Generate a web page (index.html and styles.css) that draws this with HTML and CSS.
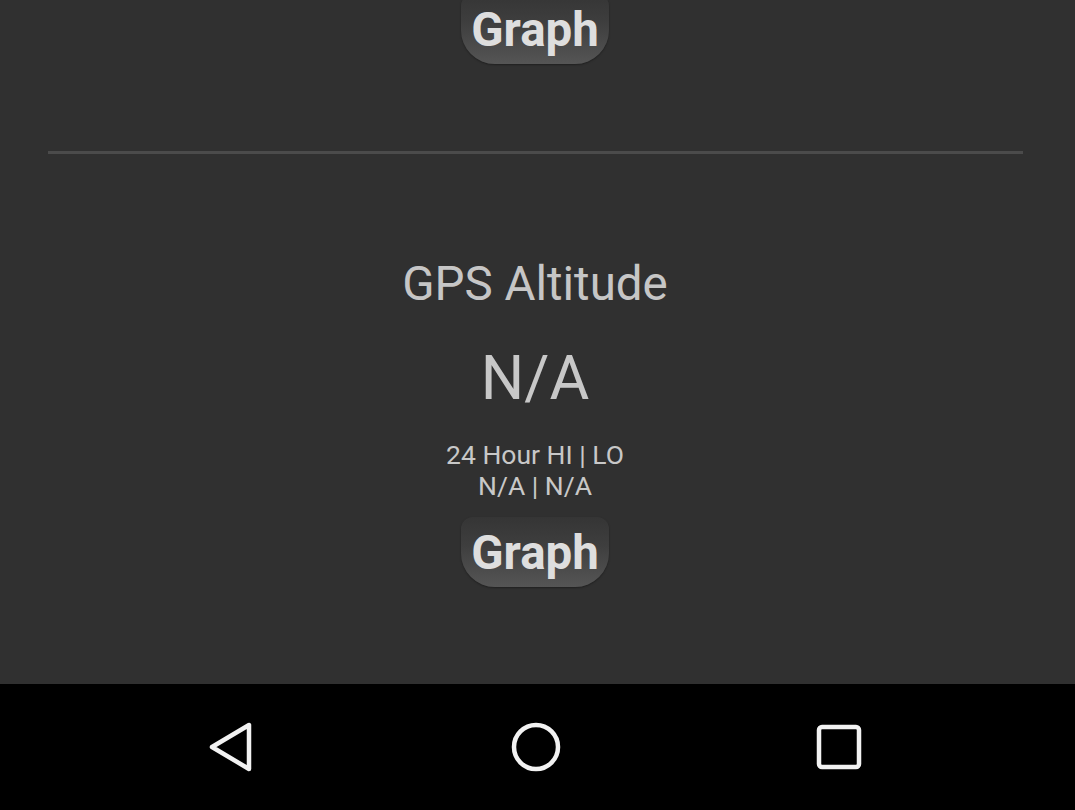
FILE: index.html
```html
<!DOCTYPE html>
<html>
<head>
<meta charset="utf-8">
<link rel="stylesheet" href="styles.css">
</head>
<body>
<div class="screen">
  <main class="content">
    <div class="graph-btn top-btn">Graph</div>
    <div class="divider"></div>
    <div class="title">GPS Altitude</div>
    <div class="value">N/A</div>
    <div class="hilo">
      <div>24 Hour HI | LO</div>
      <div>N/A | N/A</div>
    </div>
    <div class="graph-btn">Graph</div>
  </main>
  <nav class="navbar">
    <svg class="nav-icon" width="60" height="60" viewBox="0 0 60 60">
      <path d="M10 30 L47 8 L47 52 Z" fill="none" stroke="#f2f2f2" stroke-width="4.5" stroke-linejoin="round"/>
    </svg>
    <svg class="nav-icon" width="60" height="60" viewBox="0 0 60 60">
      <circle cx="30" cy="30" r="22" fill="none" stroke="#f2f2f2" stroke-width="4.5"/>
    </svg>
    <svg class="nav-icon" width="60" height="60" viewBox="0 0 60 60">
      <rect x="10" y="10" width="40" height="40" rx="3" fill="none" stroke="#f2f2f2" stroke-width="4.5"/>
    </svg>
  </nav>
</div>
</body>
</html>
```

FILE: styles.css
```css
html, body {
  margin: 0;
  padding: 0;
  background: #303030;
}
body {
  font-family: Roboto, "Liberation Sans", sans-serif;
  overflow: hidden;
}
.screen {
  width: 1075px;
  height: 810px;
  display: flex;
  flex-direction: column;
}
.content {
  flex: 1;
  display: flex;
  flex-direction: column;
  align-items: center;
  overflow: hidden;
  padding-right: 5px;
}
.graph-btn {
  width: 148px;
  height: 70px;
  box-sizing: border-box;
  border-radius: 12px 12px 34px 34px;
  background: linear-gradient(to bottom, #353535 0%, #3e3e3e 40%, #555555 100%);
  box-shadow: 0 1px 2px rgba(0,0,0,0.35);
  color: #dedede;
  font-weight: bold;
  font-size: 47.5px;
  line-height: 70px;
  text-align: center;
  margin-top: 16px;
  padding-top: 1px;
}
.top-btn {
  margin-top: -6px;
  flex-shrink: 0;
}
.divider {
  align-self: stretch;
  margin: 87px 47px 0 48px;
  height: 3px;
  background: #4b4b4b;
  flex-shrink: 0;
}
.title {
  margin-top: 103px;
  font-size: 47.5px;
  line-height: 54px;
  color: #c6c6c6;
}
.value {
  margin-top: 30px;
  font-size: 61px;
  line-height: 74px;
  color: #c8c8c8;
}
.hilo {
  margin-top: 24px;
  font-size: 26.5px;
  line-height: 31px;
  color: #c8c8c8;
  text-align: center;
}
.navbar {
  height: 126px;
  background: #000;
  display: flex;
  align-items: center;
  justify-content: space-between;
  padding: 0 206px 0 202px;
  flex-shrink: 0;
}
.nav-icon {
  display: block;
}
```
